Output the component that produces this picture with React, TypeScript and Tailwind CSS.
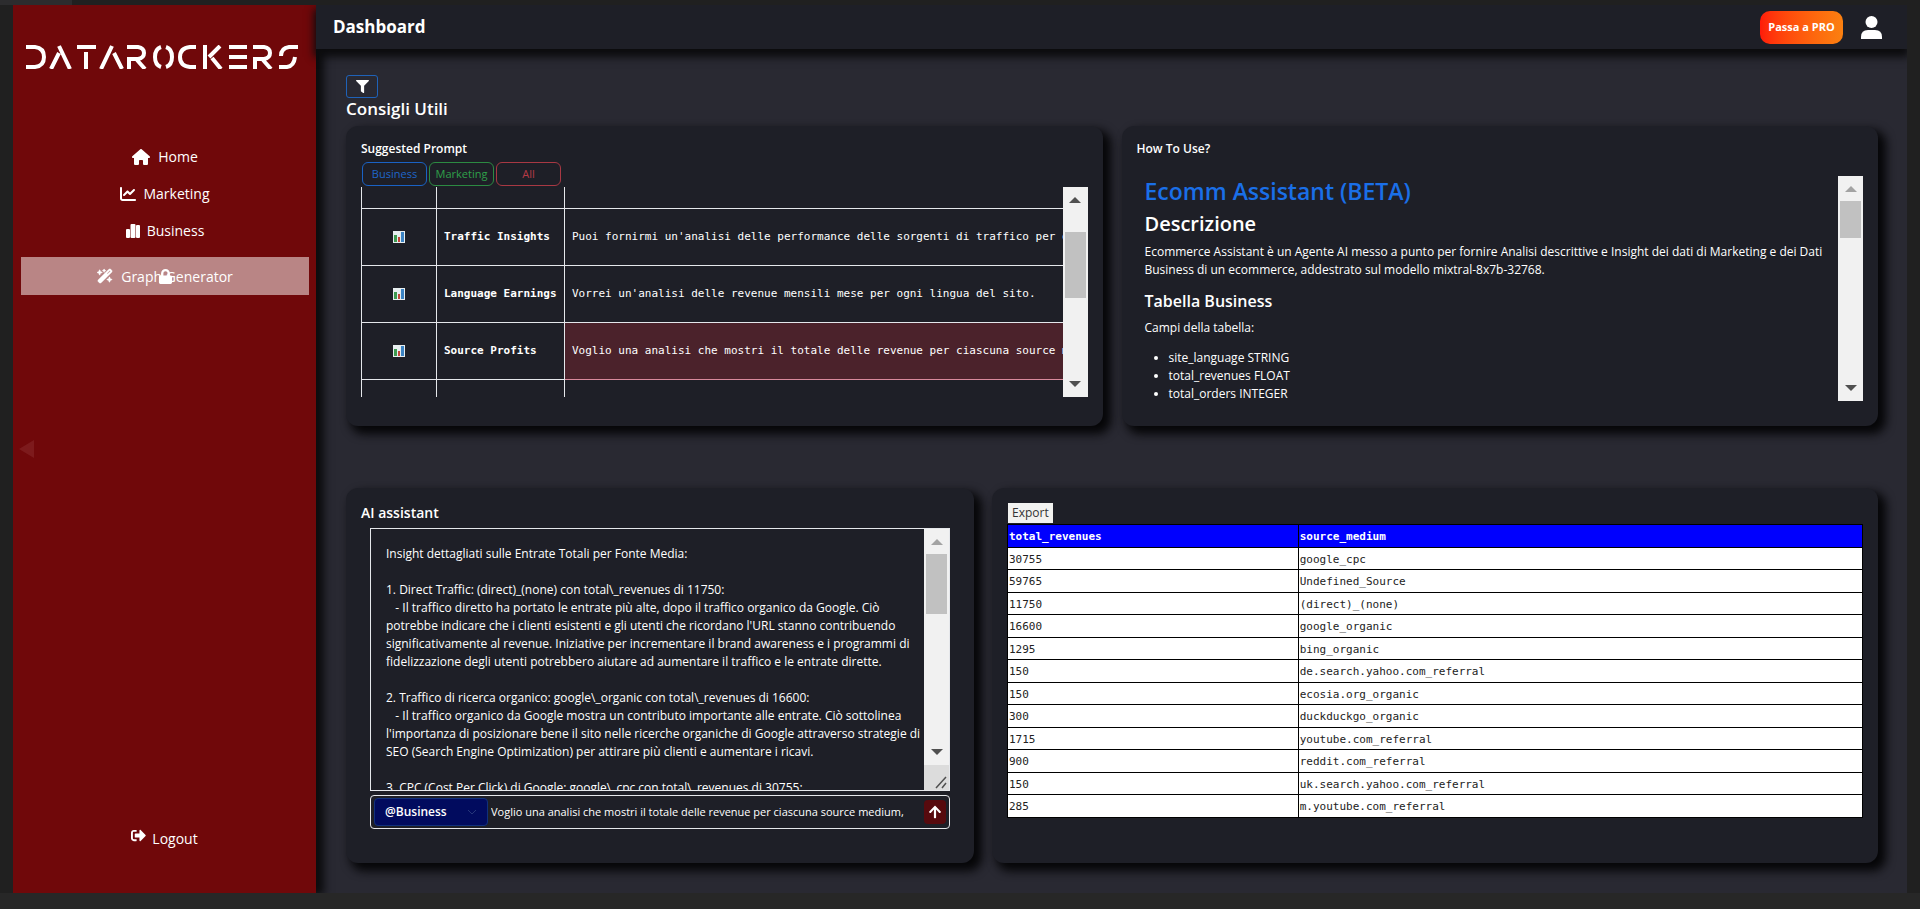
import { useState } from "react";
import { FaArrowUp, FaFilter, FaLock, FaSignOutAlt } from "react-icons/fa";
import { FaChartLine, FaHouse, FaWandMagicSparkles } from "react-icons/fa6";

const LOGO_STROKES = [
  // D
  "M0 2H9Q18 3 18 12T9 22H0",
  // A
  "M25 24L33 8M33 1L44 24",
  // T
  "M51 2H70M60 7V24",
  // A
  "M75 24L86 1M88 8L96 24",
  // R
  "M101 2H112Q118 3 118 8T112 14H103V24M111 15L119 24",
  // O
  "M135 2Q129 4 129 12T135 22M140 2Q146 4 146 12T140 22",
  // C
  "M170 2H164Q154 3 154 12T164 22H170",
  // K
  "M179 0V24M194 1L183 12M186 13L195 24",
  // E
  "M203 2H221M203 12H221M203 22H221",
  // R
  "M227 2H238Q244 3 244 8T238 14H229V24M237 15L245 24",
  // S
  "M272 2H263Q255 3 255 11M253 22H261Q268 21 269 12",
];

const PROMPTS = [
  { name: "Traffic Insights", text: "Puoi fornirmi un'analisi delle performance delle sorgenti di traffico per ogni canale?" },
  { name: "Language Earnings", text: "Vorrei un'analisi delle revenue mensili mese per ogni lingua del sito." },
  { name: "Source Profits", text: "Voglio una analisi che mostri il totale delle revenue per ciascuna source medium", active: true },
];

const ROWS: [number, string][] = [
  [30755, "google_cpc"],
  [59765, "Undefined_Source"],
  [11750, "(direct)_(none)"],
  [16600, "google_organic"],
  [1295, "bing_organic"],
  [150, "de.search.yahoo.com_referral"],
  [150, "ecosia.org_organic"],
  [300, "duckduckgo_organic"],
  [1715, "youtube.com_referral"],
  [900, "reddit.com_referral"],
  [150, "uk.search.yahoo.com_referral"],
  [285, "m.youtube.com_referral"],
];

const ANSWER = `Insight dettagliati sulle Entrate Totali per Fonte Media:

1. Direct Traffic: (direct)_(none) con total\\_revenues di 11750:
   - Il traffico diretto ha portato le entrate più alte, dopo il traffico organico da Google. Ciò
potrebbe indicare che i clienti esistenti e gli utenti che ricordano l'URL stanno contribuendo
significativamente al revenue. Iniziative per incrementare il brand awareness e i programmi di
fidelizzazione degli utenti potrebbero aiutare ad aumentare il traffico e le entrate dirette.

2. Traffico di ricerca organico: google\\_organic con total\\_revenues di 16600:
   - Il traffico organico da Google mostra un contributo importante alle entrate. Ciò sottolinea
l'importanza di posizionare bene il sito nelle ricerche organiche di Google attraverso strategie di
SEO (Search Engine Optimization) per attirare più clienti e aumentare i ricavi.

3. CPC (Cost Per Click) di Google: google\\_cpc con total\\_revenues di 30755:`;

const card = "min-w-0 rounded-xl bg-[#1e1f27] px-[15px] shadow-[6px_6px_10px_2px_#060608]";

function Logo() {
  return (
    <svg viewBox="0 0 272 24" className="w-full" role="img" aria-label="Datarockers" fill="none" stroke="white" strokeWidth="4">
      {LOGO_STROKES.map((d, i) => (
        <path key={i} d={d} />
      ))}
    </svg>
  );
}

/** Light classic scrollbar; thumb is sized by the caller */
function Scrollbar({ thumb, atTop, grip }: { thumb: string; atTop?: boolean; grip?: boolean }) {
  return (
    <div aria-hidden="true" className="flex w-[25px] shrink-0 flex-col bg-[#f1f1f1]">
      <div className="flex h-[25px] items-center justify-center">
        <svg width="12" height="6" viewBox="0 0 12 6" className={atTop ? "fill-[#a3a3a3]" : "fill-[#505050]"}>
          <path d="M0 6L6 0L12 6Z" />
        </svg>
      </div>
      <div className={`mx-[2px] bg-[#c1c1c1] ${thumb}`} />
      <div className="mt-auto flex h-[26px] items-center justify-center">
        <svg width="12" height="6" viewBox="0 0 12 6" className="fill-[#505050]">
          <path d="M0 0L6 6L12 0Z" />
        </svg>
      </div>
      {grip && (
        <svg viewBox="0 0 25 25" className="h-[25px] w-full bg-[#dcdcdc]" stroke="#505050" strokeWidth="1.5">
          <path d="M12 23L22 12M18 23L22 18" />
        </svg>
      )}
    </div>
  );
}

function BarEmoji() {
  return (
    <svg width="12" height="12" viewBox="0 0 12 12" className="mx-auto">
      <path d="M0 0H12V12H0Z" fill="#e8eef0" />
      <path d="M1 4H4V11H1Z" fill="#3d9a50" />
      <path d="M5 6H7V11H5Z" fill="#c2453a" />
      <path d="M8 1H11V11H8Z" fill="#3b83c4" />
    </svg>
  );
}

function Sidebar() {
  return (
    <aside className="relative z-10 flex w-[303px] shrink-0 flex-col bg-[#70080a] text-[14px] text-white shadow-[6px_0_8px_2px_#0c0c0e]">
      <div className="pt-10 pr-[18px] pl-[13px]">
        <Logo />
      </div>
      <nav className="mt-[69px] flex flex-col pr-[7px] pl-2">
        <a href="#home" className="flex h-[37px] items-center justify-center gap-2">
          <FaHouse size={18} /> Home
        </a>
        <a href="#marketing" className="flex h-[37px] items-center justify-center gap-[7px]">
          <FaChartLine size={16} /> Marketing
        </a>
        <a href="#business" className="flex h-[37px] items-center justify-center gap-[7px]">
          <svg width="14" height="14" viewBox="0 0 14 14" fill="currentColor">
            <rect x="0" y="5" width="4" height="9" rx="1" />
            <rect x="4.5" y="0" width="5" height="14" rx="1" />
            <rect x="10" y="1" width="4" height="13" rx="1" />
          </svg>
          Business
        </a>
        <a href="#graph" className="relative mt-2 flex h-[38px] items-center justify-center gap-2 bg-[#b98585]">
          <FaWandMagicSparkles size={16} stroke="white" strokeWidth="16" /> Graph Generator
          <FaLock size={15} className="absolute inset-0 m-auto" />
        </a>
      </nav>
      <button type="button" aria-label="Collapse" className="mt-[145px] ml-1.5 self-start">
        <svg width="15" height="18" viewBox="0 0 15 18" fill="#7d1a1c">
          <path d="M15 0V18L0 9Z" />
        </svg>
      </button>
      <a href="#logout" className="mt-auto mb-11 flex justify-center gap-1.5">
        <FaSignOutAlt size={15} /> Logout
      </a>
    </aside>
  );
}

function SuggestedPrompts() {
  return (
    <section className={`${card} flex h-[300px] flex-col pt-3.5`}>
      <h3 className="text-[12px] leading-[18px] font-semibold">Suggested Prompt</h3>
      <div className="mt-1 ml-px flex gap-0.5 text-[11px]">
        <button type="button" className="h-6 w-[65px] rounded-md border border-[#1a62c4] text-[#1f66c9]">Business</button>
        <button type="button" className="h-6 w-[65px] rounded-md border border-[#2c8a42] text-[#2fa04a]">Marketing</button>
        <button type="button" className="h-6 w-[65px] rounded-md border border-[#a83843] text-[#b53a46]">All</button>
      </div>
      <div className="mt-px flex h-[210px]">
        <div className="flex min-w-0 flex-1 overflow-hidden">
          <table className="h-[248px] w-[900px] shrink-0 table-fixed border-collapse font-['DejaVu_Sans_Mono',monospace] text-[11px]">
            <colgroup>
              <col className="w-[75px]" />
              <col className="w-[128px]" />
              <col />
            </colgroup>
            <tbody>
              <tr className="h-[21px]">
                <td className="border-x border-b border-gray-200" />
                <td className="border-x border-b border-gray-200" />
                <td className="border-b border-gray-200" />
              </tr>
              {PROMPTS.map((p) => (
                <tr key={p.name} className="h-[57px]">
                  <td className="border border-gray-200"><BarEmoji /></td>
                  <th scope="row" className="border border-gray-200 px-[7px] pt-0.5 text-left font-bold whitespace-nowrap">{p.name}</th>
                  <td className={p.active ? "border border-[#d98a9c] bg-[#4b222b] px-[7px] pt-0.5 whitespace-nowrap" : "border border-gray-200 px-[7px] pt-0.5 whitespace-nowrap"}>
                    {p.text}
                  </td>
                </tr>
              ))}
              <tr>
                <td className="border-x border-gray-200" />
                <td className="border-x border-gray-200" />
                <td />
              </tr>
            </tbody>
          </table>
        </div>
        <Scrollbar thumb="mt-5 h-[66px]" />
      </div>
    </section>
  );
}

function HowToUse() {
  return (
    <section className={`${card} flex h-[300px] flex-col pt-3.5`}>
      <h3 className="text-[12px] leading-[18px] font-semibold">How To Use?</h3>
      <div className="mt-[18px] flex h-[225px]">
        <div className="min-w-0 flex-1 overflow-hidden pl-2 text-[12px] leading-[18px]">
          <h1 className="text-[23px] leading-[30px] font-semibold text-[#1a6fe8]">Ecomm Assistant (BETA)</h1>
          <h2 className="mt-1.5 text-[20px] leading-6 font-semibold">Descrizione</h2>
          <p className="mt-[7px]">
            Ecommerce Assistant è un Agente AI messo a punto per fornire Analisi descrittive e Insight dei dati di Marketing e dei Dati
            <br />
            Business di un ecommerce, addestrato sul modello mixtral-8x7b-32768.
          </p>
          <h3 className="mt-3 text-[16px] leading-5 font-semibold">Tabella Business</h3>
          <p className="mt-2">Campi della tabella:</p>
          <ul className="mt-3 list-disc pl-6">
            <li>site_language STRING</li>
            <li>total_revenues FLOAT</li>
            <li>total_orders INTEGER</li>
          </ul>
        </div>
        <Scrollbar atTop thumb="h-[37px]" />
      </div>
    </section>
  );
}

function Assistant() {
  const [prompt, setPrompt] = useState("Voglio una analisi che mostri il totale delle revenue per ciascuna source medium,");

  return (
    <section className={`${card} h-[375px] pt-3.5`}>
      <h3 className="text-[14px] leading-[22px] font-semibold">AI assistant</h3>
      <div className="mx-[9px] mt-1">
        <div className="flex h-[263px] border border-gray-200">
          <textarea
            aria-label="Risposta"
            readOnly
            defaultValue={ANSWER}
            className="min-w-0 flex-1 resize-none overflow-hidden py-4 pl-[15px] text-[12px] leading-[18px] outline-none"
          />
          <Scrollbar atTop grip thumb="h-[60px]" />
        </div>
        <div className="mt-1 flex h-[34px] items-center gap-[3px] rounded border border-gray-200 px-[3px]">
          <div className="relative">
            <select
              aria-label="Tabella"
              className="h-7 w-[114px] appearance-none rounded border border-[#10307c] bg-[#010b5e] pl-2.5 text-[12px] font-semibold outline-none"
            >
              <option>@Business</option>
              <option>@Marketing</option>
            </select>
            <svg width="8" height="5" viewBox="0 0 8 5" className="pointer-events-none absolute top-3 right-3" fill="none" stroke="#26367a">
              <path d="M0 0L4 4L8 0" />
            </svg>
          </div>
          <input
            aria-label="Prompt"
            value={prompt}
            onChange={(e) => setPrompt(e.target.value)}
            className="min-w-0 flex-1 text-[11px] outline-none"
          />
          <button type="button" aria-label="Invia" className="flex h-6 w-[22px] items-center justify-center rounded bg-[#570a0e]">
            <FaArrowUp size={14} />
          </button>
        </div>
      </div>
    </section>
  );
}

function Results() {
  return (
    <section className={`${card} h-[375px] pt-[15px]`}>
      <button type="button" className="ml-px block h-5 bg-[#f2f2f0] px-1 text-[12px] leading-5 text-[#333]">Export</button>
      <table className="mt-px w-full table-fixed border-collapse border border-black bg-white font-['DejaVu_Sans_Mono',monospace] text-[11px] leading-4 text-[#222]">
        <colgroup>
          <col className="w-[34%]" />
          <col />
        </colgroup>
        <thead>
          <tr className="h-[23px] bg-[#0000fe] text-left text-white">
            <th className="border border-black px-px pt-0.5">total_revenues</th>
            <th className="border border-black px-px pt-0.5">source_medium</th>
          </tr>
        </thead>
        <tbody>
          {ROWS.map(([total, source]) => (
            <tr key={source} className="odd:h-[22px] even:h-[23px]">
              <td className="border border-black px-px pt-0.5">{total}</td>
              <td className="border border-black px-px pt-0.5">{source}</td>
            </tr>
          ))}
        </tbody>
      </table>
    </section>
  );
}

export default function App() {
  return (
    <div className="flex min-h-screen flex-col bg-[#202020] font-['Open_Sans','Noto_Sans',sans-serif] text-white">
      <div className="h-[5px]">
        <div className="h-full w-[72px] bg-[#2c2c2e]" />
      </div>
      <div className="mx-[13px] flex flex-1 overflow-hidden">
        <Sidebar />
        <div className="flex min-w-0 flex-1 flex-col bg-[#292932]">
          <header className="relative z-20 flex h-11 items-center bg-[#1e1f27] pr-[25px] pl-[17px] shadow-[0_6px_8px_2px_#0c0c0e]">
            <h2 className="text-[17px] font-bold">Dashboard</h2>
            <button
              type="button"
              className="ml-auto h-[33px] w-[83px] rounded-[10px] bg-linear-to-r from-[#ff1a0a] to-[#fb8010] text-[11px] font-bold"
            >
              Passa a PRO
            </button>
            <button type="button" aria-label="Account" className="ml-[18px]">
              <svg width="21" height="23" viewBox="0 0 21 23" fill="white">
                <circle cx="10.5" cy="6" r="6" />
                <path d="M0 23V21Q0 14 7 14H14Q21 14 21 21V23Z" />
              </svg>
            </button>
          </header>
          <main className="pt-[26px] pr-[29px] pl-[30px]">
            <button type="button" aria-label="Filtra" className="flex h-[23px] w-8 items-center justify-center rounded-[3px] border border-[#1f62b8]">
              <FaFilter size={13} />
            </button>
            <h2 className="mb-1.5 text-[17px] leading-[22px] font-semibold">Consigli Utili</h2>
            <div className="grid grid-cols-2 gap-[19px]">
              <SuggestedPrompts />
              <HowToUse />
            </div>
            <div className="mt-[62px] grid grid-cols-[628fr_886fr] gap-[18px]">
              <Assistant />
              <Results />
            </div>
          </main>
        </div>
      </div>
      <div className="h-4 bg-[#272727]" />
    </div>
  );
}
